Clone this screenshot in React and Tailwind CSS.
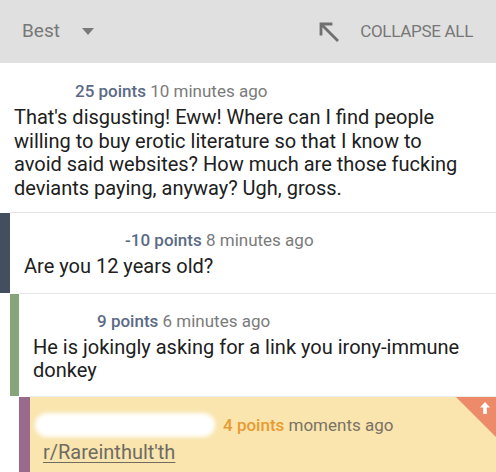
import React from 'react';

const font = { fontFamily: 'Roboto, "Noto Sans", sans-serif' };

function Meta({ points, time, pointsClass = 'text-[#5b6b86]', timeClass = 'text-[#7b7b7b]' }) {
  return (
    <p className="text-[17px] leading-[20px] whitespace-nowrap">
      <span className={`font-medium ${pointsClass}`}>{points}</span>{' '}
      <span className={timeClass}>{time}</span>
    </p>
  );
}

export default function App() {
  return (
    <div className="w-[496px] h-[472px] overflow-hidden bg-white text-[#202020]" style={font}>
      {/* Header */}
      <div className="h-[63px] bg-[#e0e0e0] flex items-center justify-between pl-[22px] pr-[23px]">
        <div className="flex items-center gap-[22px]">
          <span className="text-[19px] text-[#777]">Best</span>
          <svg width="12" height="7" viewBox="0 0 12 7"><path d="M0 0h12L6 7z" fill="#7a7a7a" /></svg>
        </div>
        <div className="flex items-center gap-[20px]">
          <svg width="22" height="22" viewBox="0 0 22 22" fill="none" stroke="#707070" strokeWidth="2.8">
            <path d="M3 13V3h10" strokeLinecap="square" />
            <path d="M3.5 3.5 20 20" />
          </svg>
          <span className="text-[17px] text-[#777] tracking-[-0.3px]">COLLAPSE ALL</span>
        </div>
      </div>

      {/* Comment 1 */}
      <div className="pt-[18px] pl-[14px] pr-[30px] h-[149px]">
        <div className="pl-[61px] mb-[5px]">
          <Meta points="25 points" time="10 minutes ago" />
        </div>
        <p className="text-[20px] leading-[23.5px]">
          That's disgusting! Eww! Where can I find people willing to buy erotic literature so that I know to avoid said websites? How much are those fucking deviants paying, anyway? Ugh, gross.
        </p>
      </div>

      {/* Comment 2 */}
      <div className="flex h-[81px]">
        <div className="w-[10px] bg-[#434e5e] mt-[1px]" />
        <div className="flex-1 border-t border-[#e4e4e4] pt-[17px] pl-[14px]">
          <div className="pl-[101px] mb-[5px]">
            <Meta points="-10 points" time="8 minutes ago" />
          </div>
          <p className="text-[20px] leading-[23.5px]">Are you 12 years old?</p>
        </div>
      </div>

      {/* Comment 3 */}
      <div className="flex h-[103px]">
        <div className="w-[10px]" />
        <div className="w-[9px] bg-[#86a67a] mt-[1px]" />
        <div className="flex-1 border-t border-[#e4e4e4] pt-[17px] pl-[14px] pr-[20px]">
          <div className="pl-[64px] mb-[5px]">
            <Meta points="9 points" time="6 minutes ago" />
          </div>
          <p className="text-[20px] leading-[23px]">He is jokingly asking for a link you irony-immune donkey</p>
        </div>
      </div>

      {/* Comment 4 */}
      <div className="flex h-[76px]">
        <div className="w-[19px]" />
        <div className="w-[11px] bg-[#9a6a8c] mt-[1px]" />
        <div className="relative flex-1 border-t border-[#ececec] bg-[#f9e5ad] pt-[16px] pl-[13px]">
          <div className="flex items-center gap-[8px] mb-[4px] -ml-[8px]">
            <div className="w-[180px] h-[24px] rounded-full bg-white blur-[2px]" />
            <Meta points="4 points" time="moments ago" pointsClass="text-[#e89b33]" timeClass="text-[#7a7266]" />
          </div>
          <p className="text-[20px] leading-[23px] text-[#6f6b63] underline underline-offset-[3px] decoration-1">r/Rareinthult'th</p>
          <div className="absolute top-0 right-0 w-[40px] h-[40px] bg-[#ec8a6a] [clip-path:polygon(0_0,100%_0,100%_100%)]">
            <svg className="absolute top-[5px] right-[6px]" width="10" height="12" viewBox="0 0 10 12">
              <path d="M5 0 10 5.5H6.8V12H3.2V5.5H0z" fill="#fff" />
            </svg>
          </div>
        </div>
      </div>
    </div>
  );
}
